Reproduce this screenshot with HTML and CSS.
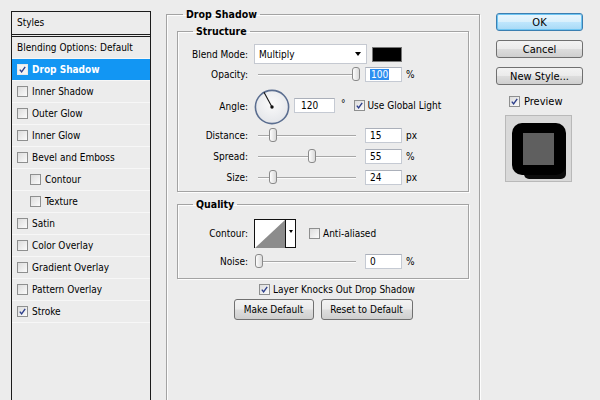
FILE: index.html
```html
<!DOCTYPE html>
<html>
<head>
<meta charset="utf-8">
<link rel="stylesheet" href="styles.css">
</head>
<body>
<div class="dialog">
  <aside class="styles-panel">
    <div class="panel-head">Styles</div>
    <div class="item plain">Blending Options: Default</div>
    <div class="item selected"><span class="cb on"><svg viewBox="0 0 11 11"><path d="M2.2 5.6 L4.4 8.4 L8.8 2.2"/></svg></span>Drop Shadow</div>
    <div class="item"><span class="cb"></span>Inner Shadow</div>
    <div class="item"><span class="cb"></span>Outer Glow</div>
    <div class="item"><span class="cb"></span>Inner Glow</div>
    <div class="item"><span class="cb"></span>Bevel and Emboss</div>
    <div class="item sub"><span class="cb"></span>Contour</div>
    <div class="item sub"><span class="cb"></span>Texture</div>
    <div class="item"><span class="cb"></span>Satin</div>
    <div class="item"><span class="cb"></span>Color Overlay</div>
    <div class="item"><span class="cb"></span>Gradient Overlay</div>
    <div class="item"><span class="cb"></span>Pattern Overlay</div>
    <div class="item"><span class="cb on"><svg viewBox="0 0 11 11"><path d="M2.2 5.6 L4.4 8.4 L8.8 2.2"/></svg></span>Stroke</div>
  </aside>

  <main class="settings">
    <fieldset class="group outer">
      <legend>Drop Shadow</legend>

      <fieldset class="group inner structure">
        <legend>Structure</legend>
        <div class="row blend-row">
          <label class="lbl">Blend Mode:</label>
          <div class="select"><span>Multiply</span><span class="arrow"></span></div>
          <span class="swatch"></span>
        </div>
        <div class="row slider-row">
          <label class="lbl">Opacity:</label>
          <div class="slider"><span class="track"></span><span class="thumb" style="left:98px"></span></div>
          <div class="field"><span class="sel">100</span></div>
          <span class="unit">%</span>
        </div>
        <div class="row angle-row">
          <label class="lbl">Angle:</label>
          <svg class="dial" viewBox="0 0 36 36" width="36" height="36">
            <defs>
              <radialGradient id="dg" cx="50%" cy="40%" r="60%">
                <stop offset="0" stop-color="#fafafa"/>
                <stop offset="1" stop-color="#e4e6ea"/>
              </radialGradient>
            </defs>
            <circle cx="18" cy="18" r="16.6" fill="url(#dg)" stroke="#5b6e90" stroke-width="1.6"/>
            <line x1="18" y1="18" x2="10" y2="3.2" stroke="#111" stroke-width="1.1"/>
            <circle cx="18" cy="18" r="1.7" fill="#111"/>
          </svg>
          <div class="field angle">120</div>
          <span class="deg">°</span>
          <span class="cb on global"><svg viewBox="0 0 11 11"><path d="M2.2 5.6 L4.4 8.4 L8.8 2.2"/></svg></span>
          <span class="cb-text">Use Global Light</span>
        </div>
        <div class="row slider-row">
          <label class="lbl">Distance:</label>
          <div class="slider"><span class="track"></span><span class="thumb" style="left:15px"></span></div>
          <div class="field">15</div>
          <span class="unit">px</span>
        </div>
        <div class="row slider-row">
          <label class="lbl">Spread:</label>
          <div class="slider"><span class="track"></span><span class="thumb" style="left:54px"></span></div>
          <div class="field">55</div>
          <span class="unit">%</span>
        </div>
        <div class="row slider-row">
          <label class="lbl">Size:</label>
          <div class="slider"><span class="track"></span><span class="thumb" style="left:15px"></span></div>
          <div class="field">24</div>
          <span class="unit">px</span>
        </div>
      </fieldset>

      <fieldset class="group inner quality">
        <legend>Quality</legend>
        <div class="row contour-row">
          <label class="lbl">Contour:</label>
          <div class="contour">
            <svg viewBox="0 0 30 28" width="30" height="28" preserveAspectRatio="none">
              <rect width="30" height="28" fill="#fff"/>
              <polygon points="0,28 30,0 30,28" fill="#8c8c8c"/>
            </svg>
            <span class="c-arrow"></span>
          </div>
          <span class="cb anti"></span>
          <span class="cb-text">Anti-aliased</span>
        </div>
        <div class="row slider-row noise-row">
          <label class="lbl">Noise:</label>
          <div class="slider"><span class="track"></span><span class="thumb" style="left:1px"></span></div>
          <div class="field">0</div>
          <span class="unit">%</span>
        </div>
      </fieldset>

      <div class="knock">
        <span class="cb on"><svg viewBox="0 0 11 11"><path d="M2.2 5.6 L4.4 8.4 L8.8 2.2"/></svg></span>
        <span class="cb-text">Layer Knocks Out Drop Shadow</span>
      </div>
      <div class="button-row">
        <button class="btn make">Make Default</button>
        <button class="btn reset">Reset to Default</button>
      </div>
    </fieldset>
  </main>

  <div class="actions">
    <button class="btn wide ok">OK</button>
    <button class="btn wide">Cancel</button>
    <button class="btn wide">New Style...</button>
    <div class="preview-row">
      <span class="cb on"><svg viewBox="0 0 11 11"><path d="M2.2 5.6 L4.4 8.4 L8.8 2.2"/></svg></span>
      <span class="cb-text">Preview</span>
    </div>
    <div class="preview">
      <svg viewBox="0 0 65 65" width="65" height="65">
        <rect x="0" y="0" width="65" height="65" fill="#d9d9d9"/>
        <rect x="18" y="20" width="42" height="43" rx="5" fill="#0c0c0c"/>
        <rect x="6" y="7" width="54" height="52" rx="10" fill="#000"/>
        <rect x="17" y="17" width="31" height="32" fill="#5f5f5f"/>
      </svg>
    </div>
  </div>
</div>
</body>
</html>
```

FILE: styles.css
```css
html, body {
  margin: 0;
  padding: 0;
  height: 100%;
  overflow: hidden;
}
body {
  background: #ececec;
  font-family: "DejaVu Sans Condensed", "DejaVu Sans", "Liberation Sans", sans-serif;
  font-stretch: condensed;
  font-size: 10px;
  color: #000;
}
.dialog {
  display: flex;
  align-items: flex-start;
}

/* ---------- left styles list ---------- */
.styles-panel {
  margin: 11px 0 0 11px;
  width: 140px;
  height: 420px;
  box-sizing: border-box;
  border: 1px solid #1c1c1c;
  display: flex;
  flex-direction: column;
}
.panel-head {
  height: 22px;
  line-height: 22px;
  padding-left: 5px;
  border-bottom: 3px double #1c1c1c;
}
.item {
  height: 21px;
  border-bottom: 1px solid #f7f7f7;
  display: flex;
  align-items: center;
  padding-left: 5px;
  white-space: nowrap;
}
.item .cb { margin-right: 4px; }
.item.sub { padding-left: 18px; }
.item.selected {
  background: #1296f3;
  color: #fff;
  font-weight: bold;
}

/* checkboxes */
.cb {
  display: inline-block;
  width: 11px;
  height: 11px;
  box-sizing: border-box;
  border: 1px solid #8e8f8f;
  background: linear-gradient(135deg, #dcdcdc, #fbfbfb);
  flex: none;
}
.cb svg {
  display: block;
  width: 9px;
  height: 9px;
}
.cb svg path {
  fill: none;
  stroke: #2d3f8c;
  stroke-width: 1.7;
}
.selected .cb {
  border-color: #e8e8e8;
  background: #f3f3f3;
}

/* ---------- settings ---------- */
.settings {
  margin-left: 15px;
  width: 314px;
}
.group {
  margin: 0;
  padding: 0;
  border: 1px solid #a3a3a3;
  box-shadow: 1px 1px 0 #fdfdfd, inset 1px 1px 0 #fdfdfd;
  min-width: 0;
}
.group legend {
  font-weight: bold;
  line-height: 13px;
  padding: 0 3px;
  font-size: 10.5px;
}
.outer {
  margin-top: 8px;
  height: 420px;
  box-sizing: border-box;
}
.outer > legend { margin-left: 16px; }
.inner { margin: 4px 10px 0 10px; }
.inner > legend { margin-left: 15px; }
.structure { padding-bottom: 3px; }
.quality { margin-top: 6px; padding-bottom: 6px; }

.row {
  display: flex;
  align-items: center;
  white-space: nowrap;
}
.lbl {
  width: 70px;
  text-align: right;
  flex: none;
}
.blend-row { height: 20px; margin-top: 6px; }
.slider-row { height: 21px; }
.angle-row { height: 37px; margin-top: 3px; }

.select {
  margin-left: 6px;
  width: 113px;
  height: 20px;
  box-sizing: border-box;
  background: #fff;
  border: 1px solid #c5c9d1;
  display: flex;
  align-items: center;
  justify-content: space-between;
  padding: 0 4px;
}
.arrow {
  width: 0;
  height: 0;
  border-left: 3.5px solid transparent;
  border-right: 3.5px solid transparent;
  border-top: 4px solid #000;
  margin-right: 1px;
}
.swatch {
  margin-left: 5px;
  width: 30px;
  height: 15px;
  box-sizing: border-box;
  background: #000;
  border: 1px solid #777;
}

.slider {
  margin-left: 6px;
  width: 106px;
  height: 15px;
  position: relative;
  flex: none;
}
.track {
  position: absolute;
  left: 4px;
  right: 4px;
  top: 7px;
  height: 1px;
  background: #a7a7a7;
  border-bottom: 1px solid #fbfbfb;
}
.thumb {
  position: absolute;
  top: 0;
  width: 8px;
  height: 14px;
  box-sizing: border-box;
  border: 1px solid #8a8a8a;
  border-radius: 3px;
  background: linear-gradient(90deg, #fdfdfd, #d9d9d9);
}
.field {
  margin-left: 5px;
  width: 37px;
  height: 15px;
  box-sizing: border-box;
  background: #fff;
  border: 1px solid #c5cad3;
  border-top-color: #abb0ba;
  padding-left: 4px;
  line-height: 13px;
  flex: none;
}
.field .sel {
  background: #2e8ef0;
  color: #fff;
  padding: 0 1px;
}
.unit { margin-left: 4px; }

.dial { margin-left: 6px; flex: none; }
.field.angle { margin-left: 4px; width: 41px; padding-left: 6px; margin-top: -3px; }
.deg { margin-left: 6px; margin-top: -6px; }
.global { margin-left: 8px; margin-top: -3px; }
.angle-row .cb-text { margin-top: -3px; }
.cb-text { margin-left: 3px; }

/* quality */
.contour-row { height: 29px; margin-top: 8px; }
.contour {
  margin-left: 6px;
  width: 42px;
  height: 29px;
  box-sizing: border-box;
  border: 1px solid #111;
  display: flex;
  background: #fff;
  flex: none;
}
.contour svg { display: block; }
.c-arrow {
  flex: 1;
  border-left: 1px solid #111;
  position: relative;
}
.c-arrow::after {
  content: "";
  position: absolute;
  left: 3px;
  top: 10px;
  border-left: 2.5px solid transparent;
  border-right: 2.5px solid transparent;
  border-top: 3px solid #000;
}
.anti { margin-left: 13px; }
.noise-row { margin-top: 3px; }

.knock {
  display: flex;
  align-items: center;
  height: 20px;
  margin-left: 92px;
  white-space: nowrap;
}
.button-row {
  display: flex;
  justify-content: center;
  gap: 7px;
}

.btn {
  font: inherit;
  font-stretch: condensed;
  color: #000;
  height: 21px;
  box-sizing: border-box;
  border: 1px solid #707070;
  border-radius: 3px;
  background: linear-gradient(#f3f3f3 0%, #ebebeb 48%, #dddddd 52%, #cfcfcf 100%);
  padding: 0;
  margin: 0;
}
.btn.make { width: 80px; }
.btn.reset { width: 92px; }

/* ---------- right actions ---------- */
.actions {
  margin-left: 16px;
  margin-top: 13px;
  width: 87px;
  display: flex;
  flex-direction: column;
  gap: 9px;
}
.btn.wide {
  width: 87px;
  height: 18px;
  font-size: 11px;
}
.btn.ok {
  border-color: #3c7fb1;
  background: linear-gradient(#eaf6fd 0%, #d9f0fc 48%, #bee6fd 52%, #a7d9f5 100%);
  box-shadow: 0 0 0 1px #6ec5f2 inset;
}
.preview-row {
  display: flex;
  align-items: center;
  height: 14px;
  margin-left: 13px;
}
.preview-row .cb-text { font-size: 11px; margin-left: 4px; }
.preview {
  margin-left: 10px;
  margin-top: -1px;
  width: 65px;
  height: 65px;
  outline: 1px solid #b9b9b9;
}
.preview svg { display: block; }
```
